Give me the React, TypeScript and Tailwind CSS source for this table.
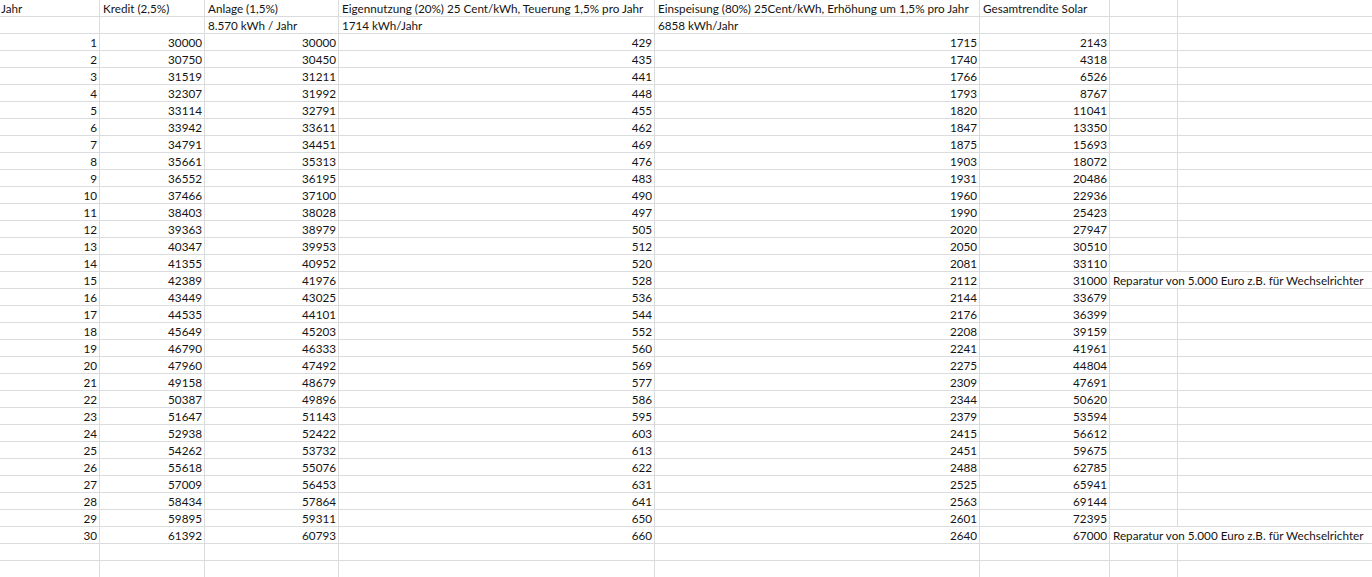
const rows: [number, number, number, number, number, number, string?][] = [
  [1, 30000, 30000, 429, 1715, 2143],
  [2, 30750, 30450, 435, 1740, 4318],
  [3, 31519, 31211, 441, 1766, 6526],
  [4, 32307, 31992, 448, 1793, 8767],
  [5, 33114, 32791, 455, 1820, 11041],
  [6, 33942, 33611, 462, 1847, 13350],
  [7, 34791, 34451, 469, 1875, 15693],
  [8, 35661, 35313, 476, 1903, 18072],
  [9, 36552, 36195, 483, 1931, 20486],
  [10, 37466, 37100, 490, 1960, 22936],
  [11, 38403, 38028, 497, 1990, 25423],
  [12, 39363, 38979, 505, 2020, 27947],
  [13, 40347, 39953, 512, 2050, 30510],
  [14, 41355, 40952, 520, 2081, 33110],
  [15, 42389, 41976, 528, 2112, 31000, "Reparatur von 5.000 Euro z.B. für Wechselrichter"],
  [16, 43449, 43025, 536, 2144, 33679],
  [17, 44535, 44101, 544, 2176, 36399],
  [18, 45649, 45203, 552, 2208, 39159],
  [19, 46790, 46333, 560, 2241, 41961],
  [20, 47960, 47492, 569, 2275, 44804],
  [21, 49158, 48679, 577, 2309, 47691],
  [22, 50387, 49896, 586, 2344, 50620],
  [23, 51647, 51143, 595, 2379, 53594],
  [24, 52938, 52422, 603, 2415, 56612],
  [25, 54262, 53732, 613, 2451, 59675],
  [26, 55618, 55076, 622, 2488, 62785],
  [27, 57009, 56453, 631, 2525, 65941],
  [28, 58434, 57864, 641, 2563, 69144],
  [29, 59895, 59311, 650, 2601, 72395],
  [30, 61392, 60793, 660, 2640, 67000, "Reparatur von 5.000 Euro z.B. für Wechselrichter"],
];

const rowCls =
  "grid grid-cols-[100px_105px_134px_316px_325px_130px_68px_1fr] h-[17px] border-b border-[#dadcdd]";
const cell = "border-r border-[#dadcdd] px-[3px] leading-[16px] whitespace-nowrap overflow-hidden";
const num = cell + " text-right pr-[2px]";

function Row({ r }: { r: (typeof rows)[number] }) {
  const [year, kredit, anlage, eigen, einsp, total, note] = r;
  return (
    <div className={rowCls}>
      <div className={num}>{year}</div>
      <div className={num}>{kredit}</div>
      <div className={num}>{anlage}</div>
      <div className={num}>{eigen}</div>
      <div className={num}>{einsp}</div>
      <div className={num}>{total}</div>
      {note ? (
        <div className="col-span-2 px-[3px] leading-[16px] whitespace-nowrap">{note}</div>
      ) : (
        <>
          <div className={cell}></div>
          <div></div>
        </>
      )}
    </div>
  );
}

function Empty() {
  return (
    <div className={rowCls}>
      {Array.from({ length: 7 }).map((_, i) => (
        <div key={i} className={cell}></div>
      ))}
      <div></div>
    </div>
  );
}

export default function App() {
  return (
    <div
      className="w-[1372px] h-[577px] overflow-hidden bg-white text-[#141414] text-[11.7px]"
      style={{ fontFamily: "Lato, 'Open Sans', sans-serif" }}
    >
      <div className={rowCls}>
        <div className={cell + " pl-[1px]"}>Jahr</div>
        <div className={cell}>Kredit (2,5%)</div>
        <div className={cell}>Anlage (1,5%)</div>
        <div className={cell}>Eigennutzung (20%) 25 Cent/kWh, Teuerung 1,5% pro Jahr</div>
        <div className={cell}>Einspeisung (80%) 25Cent/kWh, Erhöhung um 1,5% pro Jahr</div>
        <div className={cell}>Gesamtrendite Solar</div>
        <div className={cell}></div>
        <div></div>
      </div>
      <div className={rowCls}>
        <div className={cell}></div>
        <div className={cell}></div>
        <div className={cell}>8.570 kWh / Jahr</div>
        <div className={cell}>1714 kWh/Jahr</div>
        <div className={cell}>6858 kWh/Jahr</div>
        <div className={cell}></div>
        <div className={cell}></div>
        <div></div>
      </div>
      {rows.map((r) => (
        <Row key={r[0]} r={r} />
      ))}
      <Empty />
      <Empty />
    </div>
  );
}
